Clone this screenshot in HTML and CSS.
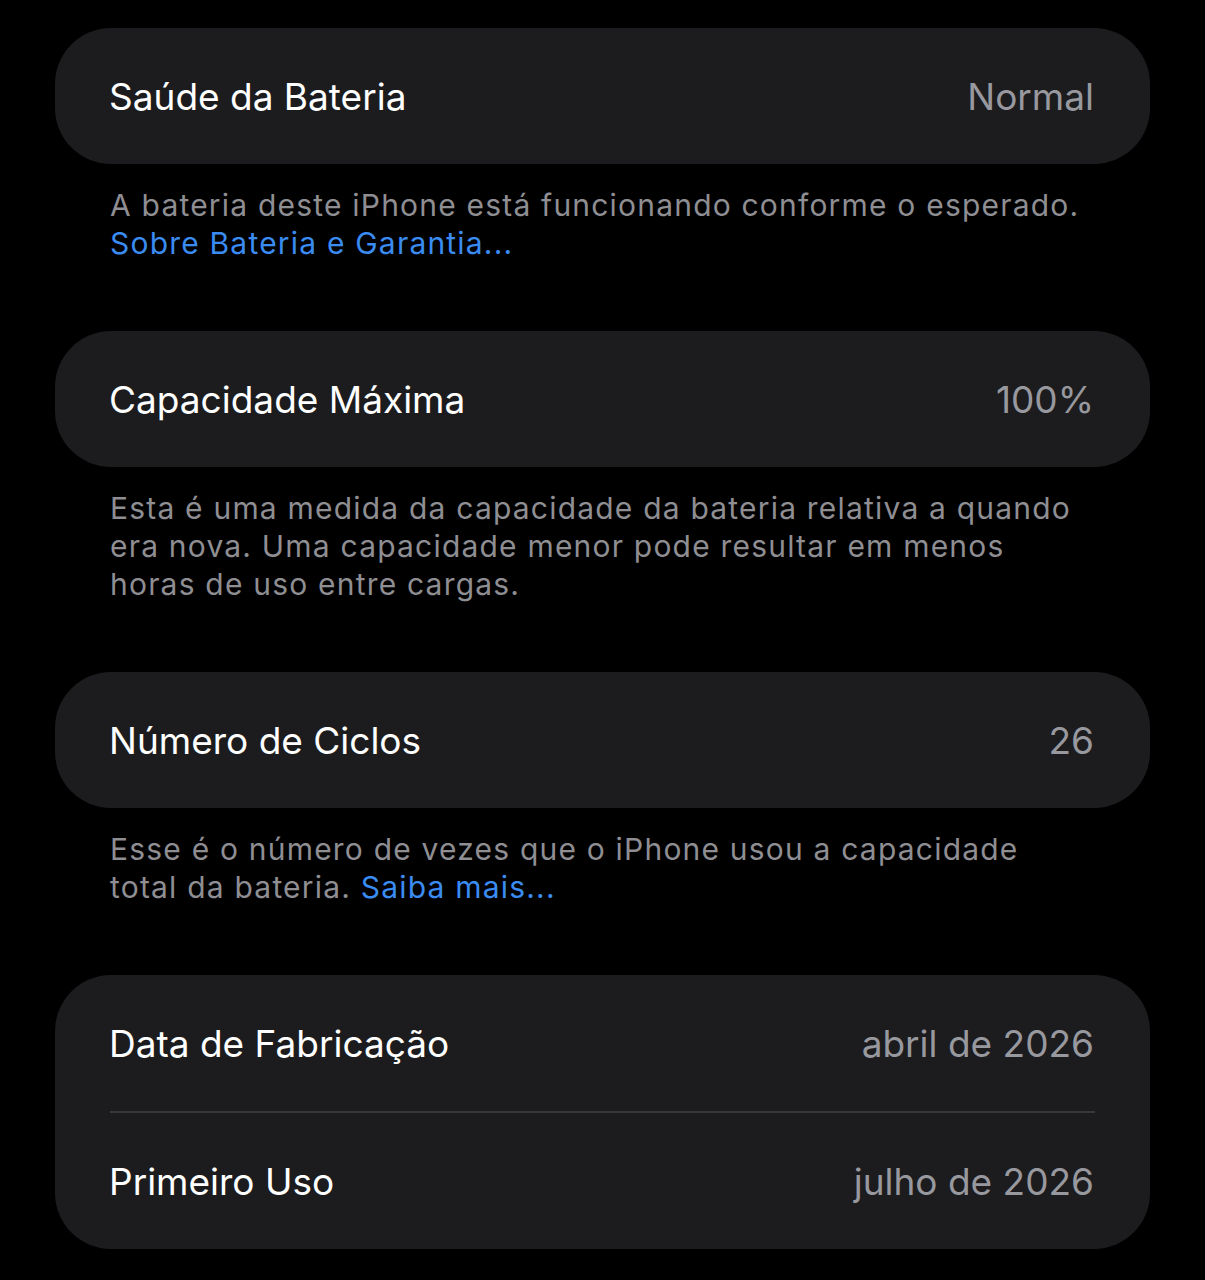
FILE: index.html
```html
<!DOCTYPE html>
<html lang="pt-BR">
<head>
  <meta charset="UTF-8" />
  <meta name="viewport" content="width=device-width, initial-scale=1" />
  <title>Saúde da Bateria</title>
  <link rel="stylesheet" href="styles.css">
</head>
<body>

  <div class="page">

    <div class="group">
      <div class="row">
        <span class="label">Saúde da Bateria</span>
        <span class="value">Normal</span>
      </div>
    </div>
    <p class="footer">
      A bateria deste iPhone está funcionando conforme o esperado.<br>
      <a class="link" href="#">Sobre Bateria e Garantia...</a>
    </p>

    <div class="group">
      <div class="row">
        <span class="label">Capacidade Máxima</span>
        <span class="value">100%</span>
      </div>
    </div>
    <p class="footer">
      Esta é uma medida da capacidade da bateria relativa a quando era nova. Uma capacidade menor pode resultar em menos horas de uso entre cargas.
    </p>

    <div class="group">
      <div class="row">
        <span class="label">Número de Ciclos</span>
        <span class="value">26</span>
      </div>
    </div>
    <p class="footer">
      Esse é o número de vezes que o iPhone usou a capacidade total da bateria. <a class="link" href="#">Saiba mais...</a>
    </p>

    <div class="group">
      <div class="row">
        <span class="label">Data de Fabricação</span>
        <span class="value">abril de 2026</span>
      </div>
      <div class="sep"></div>
      <div class="row">
        <span class="label">Primeiro Uso</span>
        <span class="value">julho de 2026</span>
      </div>
    </div>

  </div>

</body>
</html>
```

FILE: styles.css
```css
body {
  margin: 0;
  background: #000;
  color: #fff;
  font-family: Inter, "Noto Sans", sans-serif;
}

.page {
  padding: 28px 55px 0;
}

.group {
  background: #1c1c1e;
  border-radius: 56px;
  overflow: hidden;
}

.row {
  height: 136px;
  padding: 0 56px 0 54px;
  display: flex;
  align-items: center;
  justify-content: space-between;
}

.label {
  font-size: 37px;
  color: #fff;
}

.value {
  font-size: 37px;
  color: #98989f;
}

.sep {
  height: 2px;
  background: #38383a;
  margin: 0 55px;
}

.footer {
  margin: 22px 0 69px;
  padding: 0 60px 0 55px;
  font-size: 30px;
  line-height: 38px;
  letter-spacing: 1.2px;
  color: #8e8e93;
}

.link {
  color: #3a8cf3;
  text-decoration: none;
}
```
